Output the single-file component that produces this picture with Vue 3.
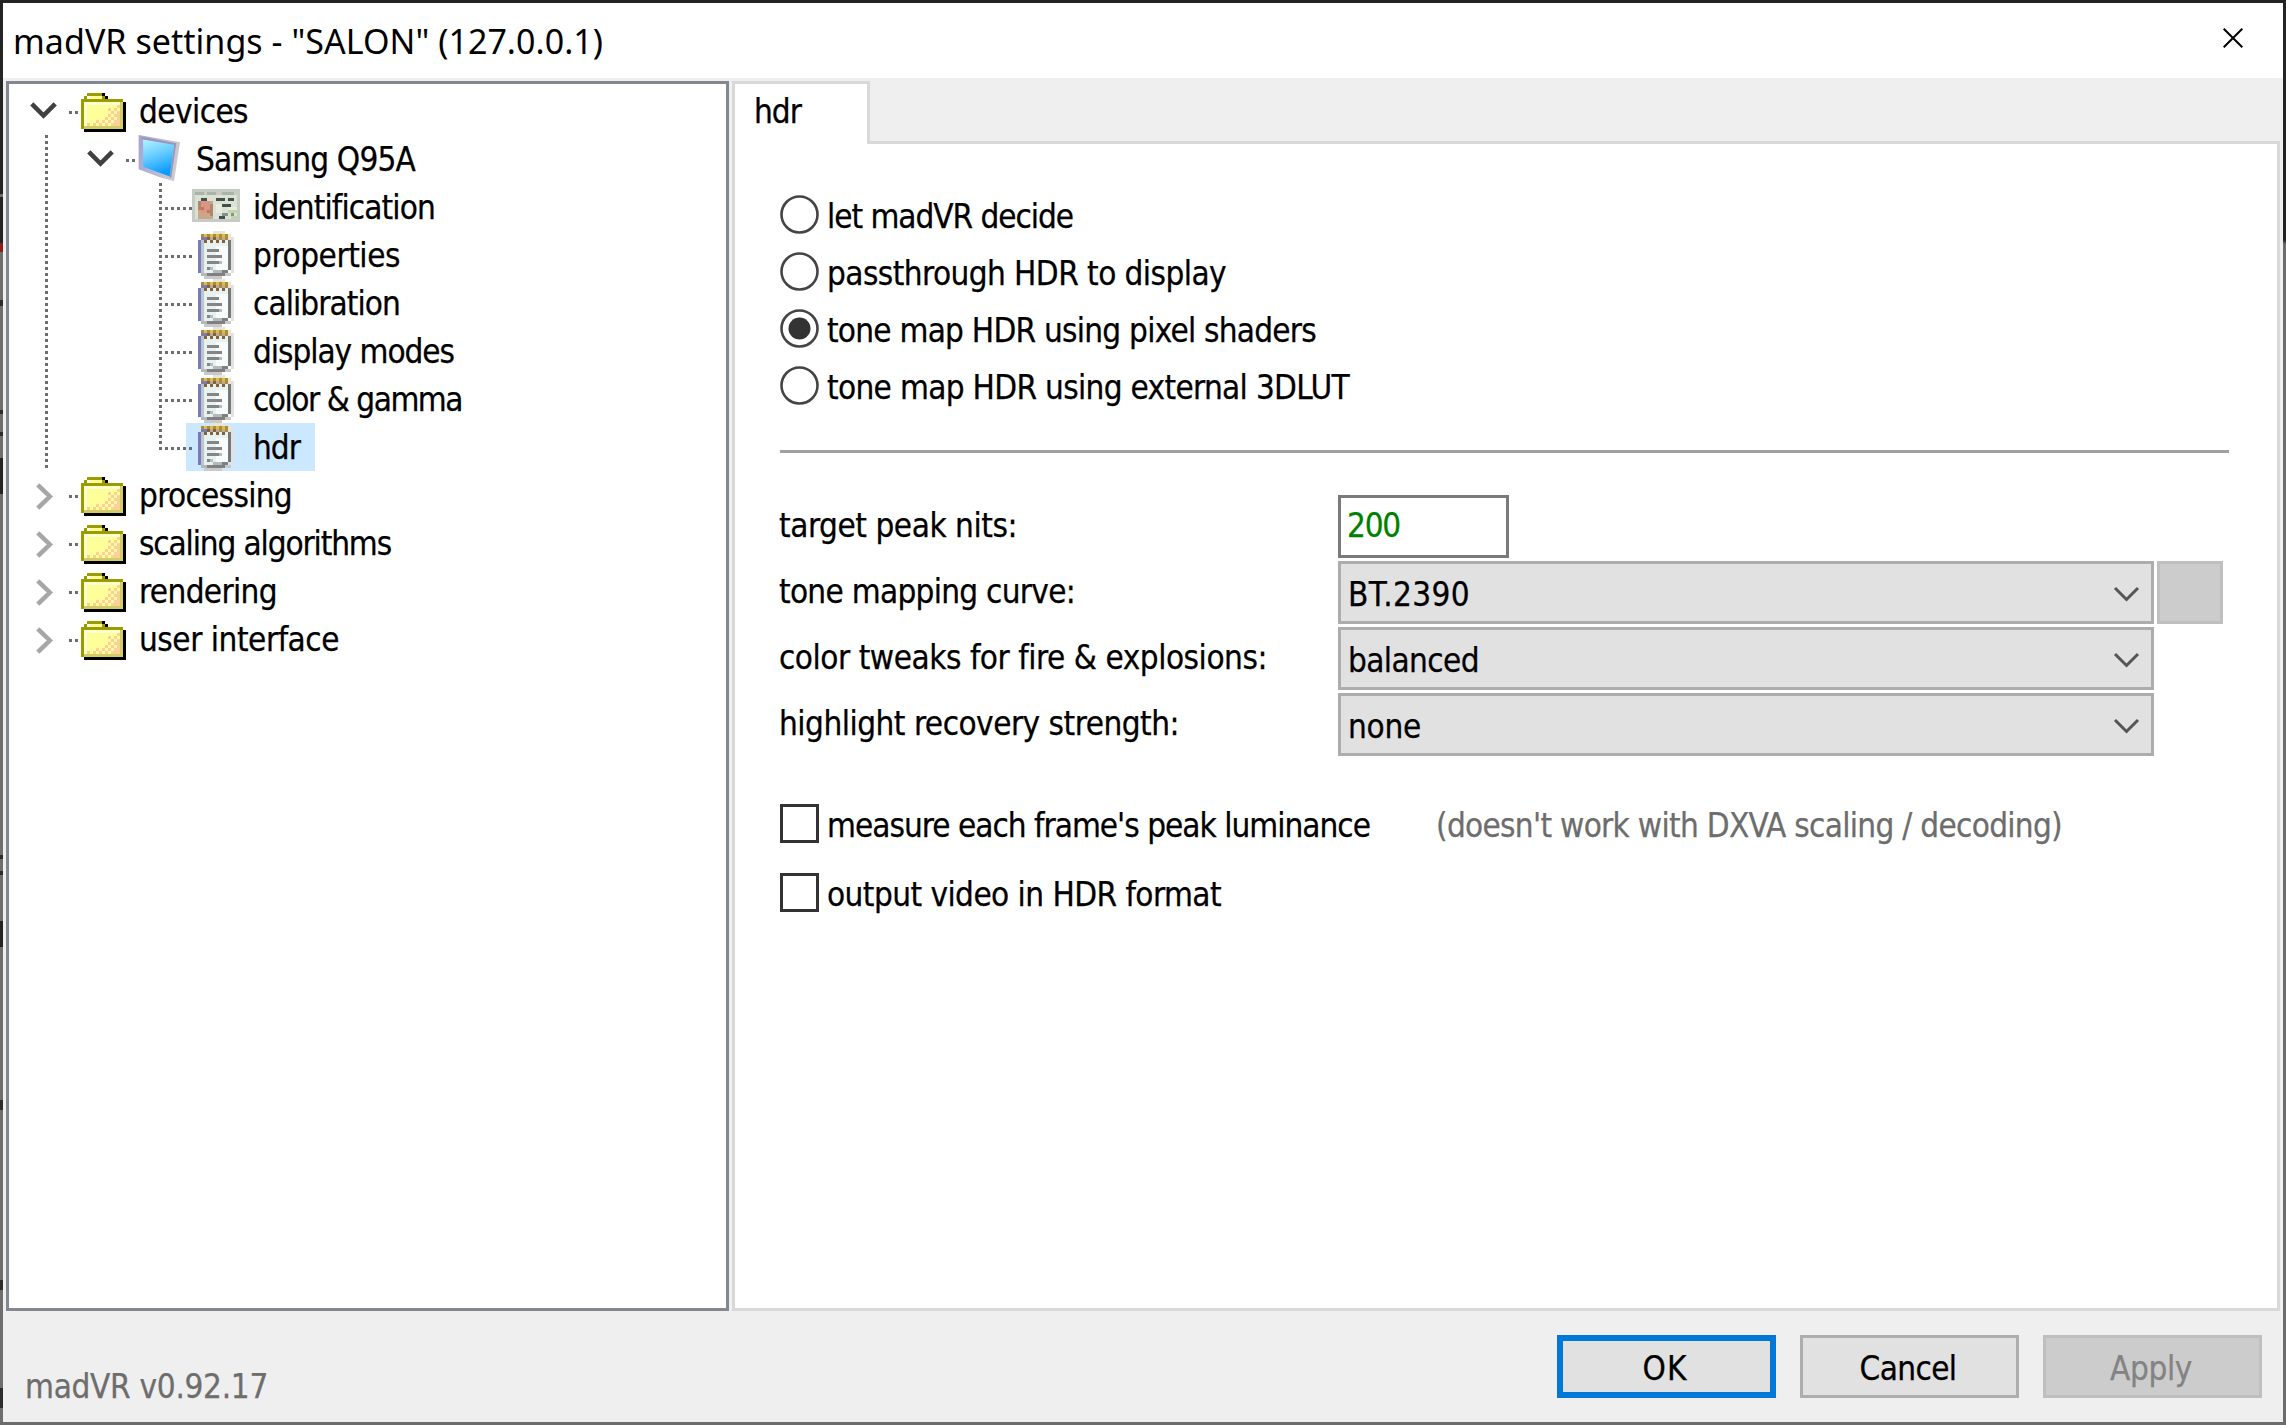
<script setup>
const tree = [
  { text: 'devices', level: 0, icon: 'folder', open: true, w: 105 },
  { text: 'Samsung Q95A', level: 1, icon: 'monitor', open: true, w: 215 },
  { text: 'identification', level: 2, icon: 'card', w: 178 },
  { text: 'properties', level: 2, icon: 'note', w: 143 },
  { text: 'calibration', level: 2, icon: 'note', w: 143 },
  { text: 'display modes', level: 2, icon: 'note', w: 197 },
  { text: 'color & gamma', level: 2, icon: 'note', w: 205 },
  { text: 'hdr', level: 2, icon: 'note', w: 43, selected: true, last: true },
  { text: 'processing', level: 0, icon: 'folder', w: 149 },
  { text: 'scaling algorithms', level: 0, icon: 'folder', w: 248 },
  { text: 'rendering', level: 0, icon: 'folder', w: 134 },
  { text: 'user interface', level: 0, icon: 'folder', w: 196 },
]

const modes = [
  { text: 'let madVR decide', w: 242 },
  { text: 'passthrough HDR to display', w: 395 },
  { text: 'tone map HDR using pixel shaders', w: 485, on: true },
  { text: 'tone map HDR using external 3DLUT', w: 518 },
]

const combos = [
  { label: 'tone mapping curve:', lw: 292, value: 'BT.2390', vw: 118, swatch: true },
  { label: 'color tweaks for fire & explosions:', lw: 484, value: 'balanced', vw: 127 },
  { label: 'highlight recovery strength:', lw: 396, value: 'none', vw: 69 },
]

// pixel cells [x, y] of the folder's shaded corner
const dither = [
  [12, 4], [9, 5], [11, 5], [10, 6], [12, 6], [9, 7], [11, 7], [12, 7],
  [8, 8], [10, 8], [12, 8], [7, 9], [9, 9], [11, 9], [12, 9], [5, 9],
  [2, 10], [4, 10], [6, 10], [8, 10], [10, 10], [11, 10], [12, 10],
]

// stretches or tightens tracking so that a label takes its given width
const vFit = {
  mounted(el, { value }) {
    const natural = el.getBoundingClientRect().width
    const n = el.textContent.trim().length
    el.style.letterSpacing = `${((value + 4 - natural) / n).toFixed(3)}px`
  },
}
</script>

<template>
  <div class="window">
    <header class="titlebar">
      <span v-fit="586" class="title">madVR settings - "SALON" (127.0.0.1)</span>
      <svg class="close" width="20" height="20" viewBox="0 0 20 20"><path d="M.7.7 19.3 19.3M19.3.7.7 19.3" /></svg>
    </header>

    <main class="body">
      <nav class="tree">
        <div v-for="(n, i) in tree" :key="i" class="row" :class="['lv' + n.level, { selected: n.selected }]">
          <span class="gutter">
            <svg v-if="n.level > 0" class="trunk" width="3" height="48" viewBox="0 0 1 16" shape-rendering="crispEdges">
              <path d="M.5 0V16" stroke-dasharray="1 1" />
            </svg>
            <svg v-if="n.open" class="arrow open" width="27" height="18" viewBox="0 0 9 6"><path d="M.6.6 4.5 4.5 8.4.6" /></svg>
            <svg v-else-if="n.level === 0" class="arrow shut" width="18" height="27" viewBox="0 0 6 9"><path d="M.6.6 4.6 4.5.6 8.4" /></svg>
            <svg v-if="n.level < 2" class="stub" width="9" height="3" viewBox="0 0 3 1" shape-rendering="crispEdges"><path d="M0 .5H3" stroke-dasharray="1 1" /></svg>
            <svg v-else class="branch" width="33" height="48" viewBox="0 0 11 16" shape-rendering="crispEdges">
              <path :d="n.last ? 'M.5 0V9' : 'M.5 0V16'" stroke-dasharray="1 1" /><path d="M2 8.5H11" stroke-dasharray="1 1" />
            </svg>
          </span>
          <span class="item">
            <svg v-if="n.icon === 'folder'" class="ic folder" width="45" height="39" viewBox="0 0 15 13" shape-rendering="crispEdges">
              <path fill="#000" d="M7 0h1v1h1v1h-2zM14 3h1v10H1v-1h13z" />
              <path fill="#9c9c00" d="M2 0h5v1h1v1h6v1H1v9H0V2h1V1h1z" />
              <path fill="#ff9" d="M2 1h5v1H2zM2 4h11v7H2z" />
              <path fill="#fff" d="M2 1h1v1H2z" />
              <path fill="#ffc" d="M1 3h12v1H2v7H1z" />
              <path fill="#cece63" d="M13 3h1v9H1v-1h12z" />
              <rect v-for="(c, k) in dither" :key="k" :x="c[0]" :y="c[1]" width="1" height="1" fill="#ffce9c" />
            </svg>
            <svg v-else-if="n.icon === 'monitor'" class="ic monitor" width="45" height="48" viewBox="0 0 15 16">
              <defs>
                <linearGradient id="scr" x1="0" y1="0" x2=".3" y2="1"><stop offset="0" stop-color="#b4f4ff" /><stop offset=".5" stop-color="#66ccff" /><stop offset="1" stop-color="#0a9cff" /></linearGradient>
                <linearGradient id="frm" x1="0" y1="0" x2="1" y2=".3"><stop offset="0" stop-color="#a5a3d2" /><stop offset="1" stop-color="#cacad0" /></linearGradient>
              </defs>
              <path d="M.2 0 14 2.4 12 15.4 7 14 .2 11.4z" fill="url(#frm)" />
              <path d="M1.7 1.5 12 3.2 10.6 13.8 1.7 10.6z" fill="url(#scr)" />
              <path d="M1.2 1 12.4 3 10.8 14.2" fill="none" stroke="#9795be" stroke-width=".6" />
            </svg>
            <svg v-else-if="n.icon === 'card'" class="ic card" width="48" height="33" viewBox="0 0 16 11" shape-rendering="crispEdges">
              <path fill="#c6cbc3" d="M0 0h16v11H0z" />
              <path fill="#dde0d4" d="M1 2h14v8H1z" />
              <path fill="#a9b3a8" d="M1 1h3v1H1zM5 1h3v1H5zM10 1h4v1h-4z" />
              <path fill="#c9a78b" d="M2 4h5v6H2z" />
              <path fill="#dc9580" d="M3 4h3v4H3z" /><path fill="#c9705f" d="M3 6h1v1H3zM5 7h1v1H5z" />
              <path fill="#a88a70" d="M2 4h1v3H2zM6 5h1v4H6z" /><path fill="#e6edde" d="M8 5h2v3H8zM12 6h3v1h-3z" />
              <path fill="#3f5149" d="M3 3h2v1H3zM8 3h3v1H8zM12 3h2v1h-2zM10 5h3v1h-3zM9 9h2v1H9z" />
              <path fill="#7f958a" d="M10 8h2v1h-2zM13 8h1v1h-1z" /><path fill="#c2d6a5" d="M12 7h3v1h-3zM13 9h2v1h-2z" />
            </svg>
            <svg v-else class="ic note" width="36" height="48" viewBox="0 0 12 16" shape-rendering="crispEdges">
              <path fill="#ece3d3" d="M5 0h4v1H5zM10 1h1v2h-1z" />
              <path fill="#e7f1ef" d="M2 3h8v11H2z" /><path fill="#f8fcfc" d="M6 5h4v8H6z" />
              <path fill="#7b78bf" d="M0 3h1v11H0zM1 2h2v1H1z" />
              <path fill="#b9c7cc" d="M1 3h1v12H1z" />
              <path fill="#b08b35" d="M1 1h9v1H1zM3 2h7v1H3z" />
              <path fill="#d6c04a" d="M2 1h1v1H2zM4 1h1v1H4zM6 1h1v1H6zM8 1h1v1H8z" />
              <path fill="#b8a9a8" d="M4 2h1v1H4zM6 2h1v1H6zM8 2h1v1H8z" />
              <path fill="#866239" d="M2 3h1v1H2zM4 3h1v1H4zM6 3h1v1H6zM8 3h1v1H8zM3 2h1v1H3zM5 2h1v1H5z" />
              <path fill="#858585" d="M3 6h4v1H3zM3 8h5v1H3zM3 10h4v1H3zM3 12h1v1H3z" />
              <path fill="#b8bcbc" d="M7 10h1v1H7zM4 12h1v1H4z" />
              <path fill="#777" d="M10 3h1v10h-1z" /><path fill="#e2e2e2" d="M11 2h1v12h-1z" />
              <path fill="#b3b8b8" d="M5 13h3v1H5zM1 14h2v1H1z" /><path fill="#808080" d="M8 13h2v1H8zM3 14h6v1H3z" />
              <path fill="#c9c9c9" d="M9 14h2v1H9zM2 15h6v1H2z" />
            </svg>
            <span v-fit="n.w" class="label">{{ n.text }}</span>
          </span>
        </div>
      </nav>

      <section class="pages">
        <div class="tabs"><div class="tab"><span v-fit="43">hdr</span></div></div>
        <div class="page">
          <div class="modes">
            <label v-for="m in modes" :key="m.text" class="option">
              <svg class="radio" width="39" height="39" viewBox="0 0 39 39"><circle cx="19.5" cy="19.5" r="18" /><circle v-if="m.on" class="dot" cx="19.5" cy="19.5" r="11" /></svg>
              <span v-fit="m.w">{{ m.text }}</span>
            </label>
          </div>
          <hr class="rule">
          <div class="fields">
            <div class="field">
              <div class="name"><span v-fit="234">target peak nits:</span></div>
              <div class="edit"><span v-fit="49">200</span></div>
            </div>
            <div v-for="c in combos" :key="c.label" class="field">
              <div class="name"><span v-fit="c.lw">{{ c.label }}</span></div>
              <div class="combo">
                <span v-fit="c.vw">{{ c.value }}</span>
                <svg width="27" height="18" viewBox="0 0 27 18"><path d="M2 3 13.5 14.5 25 3" /></svg>
              </div>
              <div v-if="c.swatch" class="swatch" />
            </div>
          </div>
          <div class="checks">
            <label class="option"><i class="box" /><span v-fit="539" class="caption">measure each frame's peak luminance</span><span class="hint"><span v-fit="622">(doesn't work with DXVA scaling / decoding)</span></span></label>
            <label class="option"><i class="box" /><span v-fit="390">output video in HDR format</span></label>
          </div>
        </div>
      </section>
    </main>

    <footer class="footer">
      <div class="version"><span v-fit="239">madVR v0.92.17</span></div>
      <div class="btn default"><span v-fit="41">OK</span></div>
      <div class="btn"><span v-fit="93">Cancel</span></div>
      <div class="btn disabled"><span v-fit="78">Apply</span></div>
    </footer>
  </div>
</template>

<style>
body { background: #efefef; }
</style>

<style scoped>
* { box-sizing: border-box; }
.window {
  position: relative;
  display: flex;
  flex-direction: column;
  width: 2286px;
  height: 1425px;
  padding: 3px;
  overflow: hidden;
  /* the desktop shows through along the thin window edge */
  background:
    linear-gradient(
      #232424 0 194px, #6e6e6e 194px 197px, #232424 197px 243px, #8e1c1c 243px 252px, #6e6e6e 252px 300px,
      #2c2c2c 300px 306px, #6e6e6e 306px 410px, #2c2c2c 410px 414px, #6e6e6e 414px 432px, #2c2c2c 432px 436px,
      #6e6e6e 436px 458px, #232424 458px 494px, #6e6e6e 494px 855px, #2c2c2c 855px 859px, #6e6e6e 859px 871px,
      #2c2c2c 871px 875px, #6e6e6e 875px 921px, #232424 921px 947px, #6e6e6e 947px 1100px, #2c2c2c 1100px 1110px,
      #6e6e6e 1110px 1280px, #2c2c2c 1280px 1290px, #6e6e6e 1290px 1388px, #2c2c2c 1388px 1408px, #6e6e6e 1408px
    ) 0 0 / 3px 100% no-repeat,
    linear-gradient(#232424 0 240px, #6b6d6b 244px) 100% 0 / 3px 100% no-repeat,
    #efefef;
  color: #000;
  font: 33px/48px "DejaVu Sans Condensed", "DejaVu Sans", sans-serif;
  font-stretch: condensed;
  -webkit-text-stroke: .25px;
  white-space: nowrap;
}
.window::before {
  content: "";
  position: absolute;
  inset: 0;
  border-top: 3px solid #232323;
  border-bottom: 3px solid #6b6d6b;
  pointer-events: none;
}
span { display: inline-block; }
.titlebar {
  display: flex;
  justify-content: space-between;
  align-items: flex-start;
  height: 75px;
  padding: 13px 40px 0 10px;
  background: #fff;
}
.title { font: 34px/50px "Noto Sans", sans-serif; -webkit-text-stroke: 0; }
.close { margin-top: 12px; stroke: #000; stroke-width: 2; fill: none; }
.body { display: flex; gap: 3px; height: 1230px; margin: 3px 3px 0; }
.tree { width: 723px; border: 3px solid #828790; background: #fff; padding-top: 3px; }
.row { display: flex; height: 48px; }
.gutter { position: relative; flex: none; width: 69px; }
.lv1 .gutter { width: 126px; }
.lv2 .gutter { width: 177px; }
.gutter svg { position: absolute; fill: none; stroke: #6d6d6d; }
.gutter .trunk { left: 36px; top: 0; }
.gutter .arrow { stroke: #404040; stroke-width: 1.5; }
.gutter .open { right: 21px; top: 15px; }
.gutter .shut { left: 27px; top: 12px; stroke: #a6a6a6; stroke-width: 1.5; }
.gutter .stub { right: 0; top: 24px; }
.gutter .branch { left: 150px; top: 0; z-index: 1; }
.item { display: flex; padding-right: 10px; }
.ic { flex: none; }
.label { padding-top: 1px; }
.folder { margin: 6px 13px 0 3px; }
.monitor { margin: 0 13px 0 3px; }
.card { margin: 6px 13px 0 6px; }
.note { margin: 0 19px 0 12px; }
.selected .item { background: #cce8ff; width: 129px; }
.pages { flex: 1; display: flex; flex-direction: column; }
.tabs { height: 60px; }
.tab {
  position: relative;
  z-index: 1;
  width: 138px;
  height: 63px;
  padding: 4px 0 0 19px;
  border: 3px solid #d9d9d9;
  border-bottom: 0;
  background: #fff;
}
.page { flex: 1; border: 3px solid #d9d9d9; background: #fff; padding: 51px 48px 0 45px; }
.modes { display: grid; row-gap: 18px; }
.option { display: flex; height: 39px; line-height: 44px; }
.radio { margin-right: 8px; fill: #fff; stroke: #444; stroke-width: 2.6; }
.radio .dot { fill: #333; stroke: none; }
.rule { height: 3px; margin: 45px 0 42px; border: 0; background: #a0a0a0; }
.fields { display: grid; row-gap: 3px; }
.field { display: flex; height: 63px; line-height: 61px; }
.name { width: 559px; margin-left: -1px; }
.edit { width: 171px; border: 3px solid #7a7a7a; padding-left: 6px; line-height: 55px; color: #008000; }
.combo {
  display: flex;
  justify-content: space-between;
  width: 816px;
  padding: 0 11px 0 7px;
  border: 3px solid #adadad;
  background: #e1e1e1;
  line-height: 61px;
}
.combo svg { margin-top: 21px; fill: none; stroke: #555; stroke-width: 3; }
.swatch { width: 66px; margin-left: 3px; border: 3px solid #bfbfbf; background: #ccc; }
.checks { display: grid; row-gap: 30px; margin-top: 48px; }
.box { width: 39px; height: 39px; margin-right: 8px; border: 3px solid #333; }
.hint { margin-left: 66px; color: #6d6d6d; }
.footer { display: flex; gap: 24px; padding: 24px 21px 0 22px; height: 111px; }
.version { flex: 1; color: #6d6d6d; padding-top: 28px; }
.btn {
  width: 219px;
  height: 63px;
  padding-right: 3px;
  border: 3px solid #adadad;
  background: #e1e1e1;
  text-align: center;
  line-height: 61px;
}
.default { border: 6px solid #0078d7; line-height: 55px; }
.disabled { border-color: #bfbfbf; background: #ccc; color: #838383; }
</style>
